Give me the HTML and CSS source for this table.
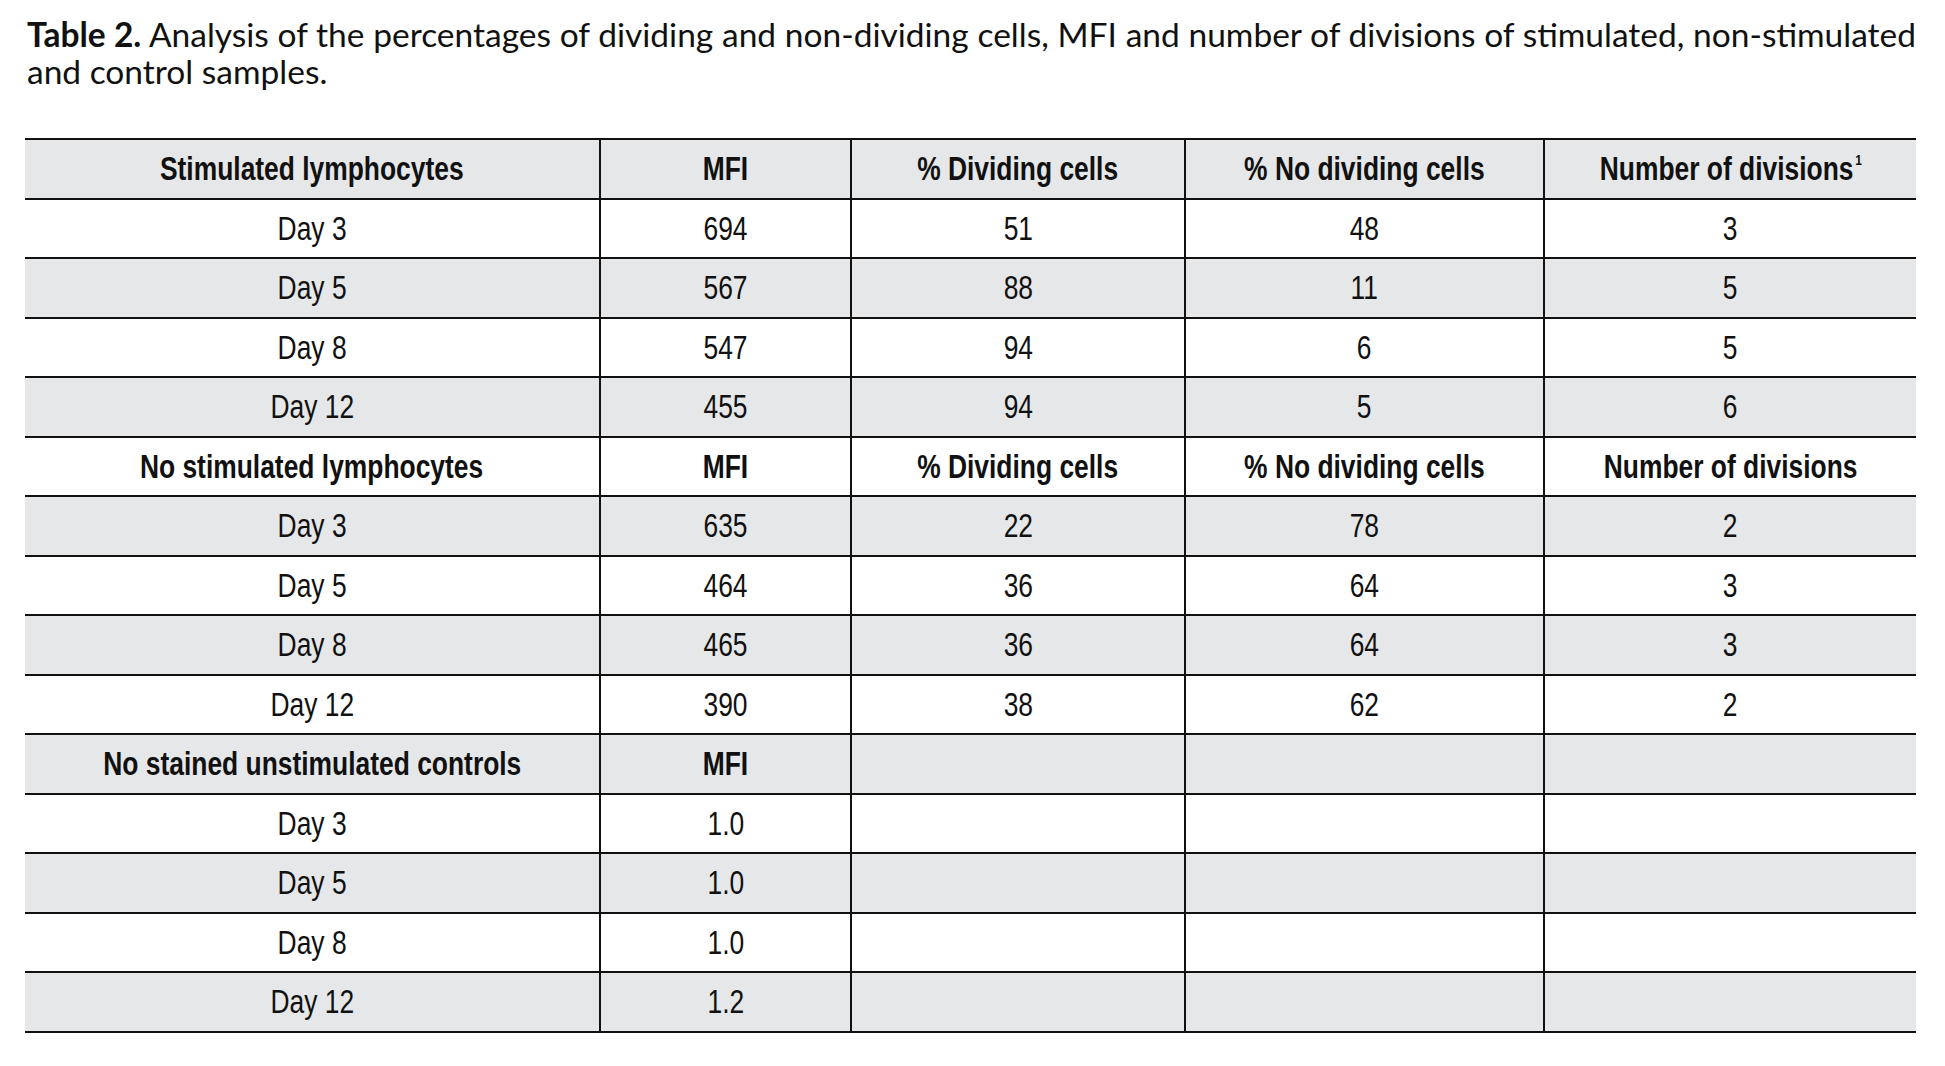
FILE: index.html
```html
<!DOCTYPE html>
<html lang="en">
<head>
<meta charset="utf-8">
<title>Table 2</title>
<link rel="stylesheet" href="styles.css">
</head>
<body>
<div class="caption">
  <div class="cap-line cap-first"><b>Table 2.</b> Analysis of the percentages of dividing and non-dividing cells, MFI and number of divisions of stimulated, non-stimulated</div>
  <div class="cap-line">and control samples.</div>
</div>
<table class="data">
  <colgroup>
    <col class="c1"><col class="c2"><col class="c3"><col class="c4"><col class="c5">
  </colgroup>
  <tbody>
    <tr class="head"><td><span class="cx">Stimulated lymphocytes</span></td><td><span class="cx">MFI</span></td><td><span class="cx">% Dividing cells</span></td><td><span class="cx">% No dividing cells</span></td><td><span class="cx">Number of divisions<sup>1</sup></span></td></tr>
    <tr><td><span class="cx">Day 3</span></td><td><span class="cx">694</span></td><td><span class="cx">51</span></td><td><span class="cx">48</span></td><td><span class="cx">3</span></td></tr>
    <tr><td><span class="cx">Day 5</span></td><td><span class="cx">567</span></td><td><span class="cx">88</span></td><td><span class="cx">11</span></td><td><span class="cx">5</span></td></tr>
    <tr><td><span class="cx">Day 8</span></td><td><span class="cx">547</span></td><td><span class="cx">94</span></td><td><span class="cx">6</span></td><td><span class="cx">5</span></td></tr>
    <tr><td><span class="cx">Day 12</span></td><td><span class="cx">455</span></td><td><span class="cx">94</span></td><td><span class="cx">5</span></td><td><span class="cx">6</span></td></tr>
    <tr class="head"><td><span class="cx">No stimulated lymphocytes</span></td><td><span class="cx">MFI</span></td><td><span class="cx">% Dividing cells</span></td><td><span class="cx">% No dividing cells</span></td><td><span class="cx">Number of divisions</span></td></tr>
    <tr><td><span class="cx">Day 3</span></td><td><span class="cx">635</span></td><td><span class="cx">22</span></td><td><span class="cx">78</span></td><td><span class="cx">2</span></td></tr>
    <tr><td><span class="cx">Day 5</span></td><td><span class="cx">464</span></td><td><span class="cx">36</span></td><td><span class="cx">64</span></td><td><span class="cx">3</span></td></tr>
    <tr><td><span class="cx">Day 8</span></td><td><span class="cx">465</span></td><td><span class="cx">36</span></td><td><span class="cx">64</span></td><td><span class="cx">3</span></td></tr>
    <tr><td><span class="cx">Day 12</span></td><td><span class="cx">390</span></td><td><span class="cx">38</span></td><td><span class="cx">62</span></td><td><span class="cx">2</span></td></tr>
    <tr class="head"><td><span class="cx">No stained unstimulated controls</span></td><td><span class="cx">MFI</span></td><td></td><td></td><td></td></tr>
    <tr><td><span class="cx">Day 3</span></td><td><span class="cx">1.0</span></td><td></td><td></td><td></td></tr>
    <tr><td><span class="cx">Day 5</span></td><td><span class="cx">1.0</span></td><td></td><td></td><td></td></tr>
    <tr><td><span class="cx">Day 8</span></td><td><span class="cx">1.0</span></td><td></td><td></td><td></td></tr>
    <tr><td><span class="cx">Day 12</span></td><td><span class="cx">1.2</span></td><td></td><td></td><td></td></tr>
  </tbody>
</table>
</body>
</html>
```
FILE: styles.css
```css
html, body {
  margin: 0;
  padding: 0;
  background: #ffffff;
}

body {
  color: #111111;
}

.caption {
  margin-left: 27px;
  width: 1889px;
  padding-top: 16px;
  font-family: Lato, "DejaVu Sans", sans-serif;
  font-size: 33.5px;
  line-height: 37px;
}

.cap-line {
  white-space: nowrap;
}

.cap-first {
  text-align: justify;
  text-align-last: justify;
}

.caption b {
  font-weight: 700;
}

.data {
  margin-top: 48px;
  margin-left: 25px;
  width: 1891px;
  table-layout: fixed;
  border-collapse: separate;
  border-spacing: 0;
  border-top: 2px solid #111111;
  font-family: "Liberation Sans", Arial, sans-serif;
  font-size: 33px;
  color: #111111;
}

.c1 { width: 576px; }
.c2 { width: 251px; }
.c3 { width: 334px; }
.c4 { width: 359px; }
.c5 { width: 371px; }

.data td {
  height: 57.5px;
  padding: 0;
  text-align: center;
  vertical-align: middle;
  border-bottom: 2px solid #111111;
  border-right: 2px solid #111111;
  line-height: 1;
  white-space: nowrap;
}

.data td:last-child {
  border-right: none;
}

.cx {
  display: inline-block;
  transform: scaleX(0.8);
  transform-origin: center center;
}

.data tr:nth-child(odd) td {
  background: #e6e7e8;
}

.data tr.head td {
  font-weight: 700;
}

.data sup {
  font-size: 15px;
  vertical-align: top;
  position: relative;
  top: 0;
  margin-left: 2px;
}
```
